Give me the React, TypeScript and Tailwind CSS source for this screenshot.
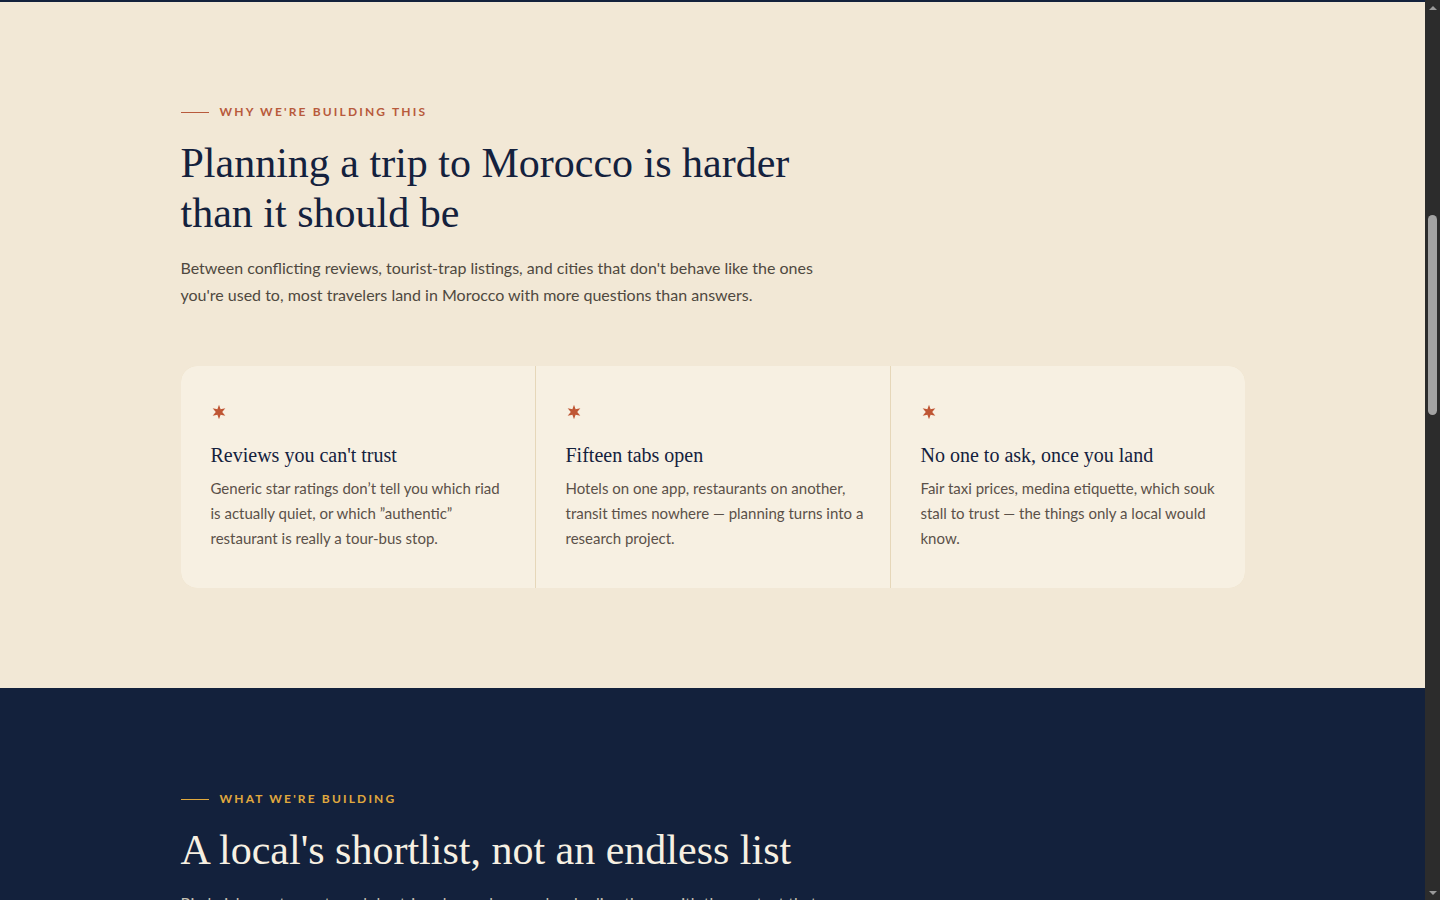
const problems = [
  {
    title: "Reviews you can't trust",
    body: 'Generic star ratings don\u2019t tell you which riad is actually quiet, or which \u201dauthentic\u201d restaurant is really a tour-bus stop.',
  },
  {
    title: 'Fifteen tabs open',
    body: 'Hotels on one app, restaurants on another, transit times nowhere \u2014 planning turns into a research project.',
  },
  {
    title: 'No one to ask, once you land',
    body: 'Fair taxi prices, medina etiquette, which souk stall to trust \u2014 the things only a local would know.',
  },
]

const serif = "font-['Liberation_Serif','Times_New_Roman',serif]"
const sans = "font-['Lato','Open_Sans',sans-serif]"

function Star() {
  return (
    <svg className="w-[16px] h-[16px] block" viewBox="0 0 24 24" fill="#bf5634">
      <path d="M12 1 L14.4 7.8 L21.5 6.5 L16.8 12 L21.5 17.5 L14.4 16.2 L12 23 L9.6 16.2 L2.5 17.5 L7.2 12 L2.5 6.5 L9.6 7.8 Z" />
    </svg>
  )
}

function Eyebrow({ label, color, line }: { label: string; color: string; line: string }) {
  return (
    <div className="flex items-center gap-[11px] h-5">
      <span className={`w-[28px] h-px ${line}`} />
      <span className={`${sans} text-[12px] font-bold tracking-[0.18em] uppercase ${color}`}>{label}</span>
    </div>
  )
}

// browser scrollbar as it appears in the capture (dark scheme)
function Scrollbar() {
  return (
    <div className="w-[15px] shrink-0 bg-[#2c2c2c] flex flex-col items-center">
      <div className="h-[15px] flex items-center justify-center">
        <span className="w-0 h-0 border-x-[4px] border-x-transparent border-b-[4px] border-b-[#9a9a9a]" />
      </div>
      <div className="flex-1 w-full flex flex-col items-center">
        <div className="mt-[200px] w-[9px] h-[200px] rounded-full bg-[#a3a3a3]" />
      </div>
      <div className="h-[15px] flex items-center justify-center">
        <span className="w-0 h-0 border-x-[4px] border-x-transparent border-t-[4px] border-t-[#9a9a9a]" />
      </div>
    </div>
  )
}

export default function App() {
  return (
    <div className="h-screen flex overflow-hidden bg-[#13213c]">
      <main className="flex-1 min-w-0 overflow-hidden">
        {/* bottom edge of hero */}
        <div className="h-[2px] bg-[#13213c]" />

        {/* Problem */}
        <section className="bg-[#f2e8d6] pt-[100px] pb-[100px]">
          <div className="max-w-[1064px] mx-auto">
            <Eyebrow label="Why we're building this" color="text-[#b85a3c]" line="bg-[#b85a3c]" />
            <h2 className={`${serif} mt-[16px] max-w-[640px] text-[42px] leading-[50px] text-[#14213d]`}>
              Planning a trip to Morocco is harder than it should be
            </h2>
            <p className={`${sans} mt-[16px] max-w-[640px] text-[16px] leading-[27px] text-[#4f4840]`}>
              Between conflicting reviews, tourist-trap listings, and cities that don&apos;t behave like the ones
              you&apos;re used to, most travelers land in Morocco with more questions than answers.
            </p>

            <div className="mt-[58px] grid grid-cols-3 gap-px bg-[#e6d7b9] rounded-[16px] overflow-hidden">
              {problems.map((p) => (
                <div key={p.title} className="bg-[#f7f0e2] pl-[30px] pr-[24px] pt-[38px] pb-[37px]">
                  <Star />
                  <h3 className={`${serif} mt-[21px] text-[20px] leading-[28px] text-[#14213d]`}>{p.title}</h3>
                  <p className={`${sans} mt-[7px] text-[15px] leading-[25px] text-[#5b5149]`}>{p.body}</p>
                </div>
              ))}
            </div>
          </div>
        </section>

        {/* Solution */}
        <section className="bg-[#13213c] pt-[101px] pb-[120px]">
          <div className="max-w-[1064px] mx-auto">
            <Eyebrow label="What we're building" color="text-[#e0a93e]" line="bg-[#e0a93e]" />
            <h2 className={`${serif} mt-[14px] text-[42px] leading-[54px] text-[#f7f0e2]`}>
              A local&apos;s shortlist, not an endless list
            </h2>
            <p className={`${sans} mt-[12px] max-w-[640px] text-[16px] leading-[27px] text-[#c8c1b2]`}>
              Riad picks, restaurants and day trips chosen by people who live there, with the context that
              makes each one worth your time.
            </p>
          </div>
        </section>
      </main>
      <Scrollbar />
    </div>
  )
}
